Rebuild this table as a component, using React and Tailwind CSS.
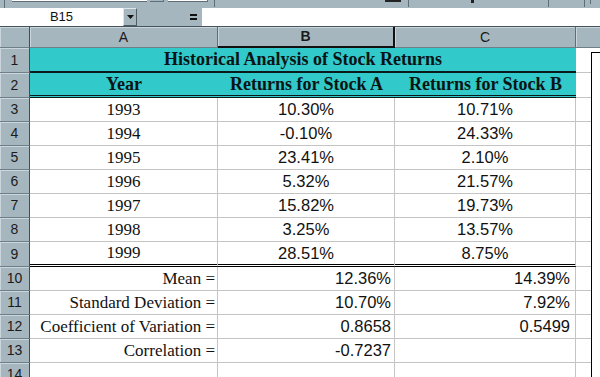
import React from "react";

const serif = { fontFamily: '"Liberation Serif", "Times New Roman", serif' };
const sans = { fontFamily: '"Liberation Sans", Arial, sans-serif' };

const years = [
  ["1993", "10.30%", "10.71%"],
  ["1994", "-0.10%", "24.33%"],
  ["1995", "23.41%", "2.10%"],
  ["1996", "5.32%", "21.57%"],
  ["1997", "15.82%", "19.73%"],
  ["1998", "3.25%", "13.57%"],
  ["1999", "28.51%", "8.75%"],
];

const stats = [
  ["Mean =", "12.36%", "14.39%"],
  ["Standard Deviation =", "10.70%", "7.92%"],
  ["Coefficient of Variation =", "0.8658", "0.5499"],
  ["Correlation =", "-0.7237", ""],
];

function RowHead({ n }) {
  return (
    <div
      className="w-[30px] shrink-0 flex items-center justify-center bg-[#a6b6be] border-r border-r-[#3e4e56] border-b border-b-[#6f7f87] shadow-[inset_1px_1px_0_#cbd6dc] text-[14px] text-[#1a1a1a]"
      style={sans}
    >
      {n}
    </div>
  );
}

function DataRow({ n, a, b, c, last, stat }) {
  const bottom = last
    ? "border-b-[3px] border-double border-b-black"
    : "border-b border-b-[#c4c4c4]";
  return (
    <div className={`flex ${n === 9 ? "h-[25px]" : "h-[24px]"}`}>
      <RowHead n={n} />
      <div
        className={`w-[188px] shrink-0 flex items-center ${stat ? "justify-end pr-[2px]" : "justify-center"} border-r border-r-[#c4c4c4] ${bottom} text-[17px] text-[#111]`}
        style={serif}
      >
        {a}
      </div>
      <div
        className={`w-[177px] shrink-0 flex items-center ${stat ? "justify-end pr-[3px]" : "justify-center"} border-r border-r-[#c4c4c4] ${bottom} text-[16.5px] text-[#111]`}
        style={sans}
      >
        {b}
      </div>
      <div
        className={`w-[181px] shrink-0 flex items-center ${stat ? "justify-end pr-[5px]" : "justify-center"} border-r border-r-[#c4c4c4] ${bottom} text-[16.5px] text-[#111]`}
        style={sans}
      >
        {c}
      </div>
      <div className="flex-1 border-b border-b-[#c4c4c4]" />
    </div>
  );
}

export default function App() {
  return (
    <div className="relative w-[600px] h-[377px] overflow-hidden bg-white">
      {/* bottom of the formatting toolbar */}
      <div className="h-[8px] bg-[#a6b6be] relative flex">
        <div className="w-[4px] border-r border-[#5e6e76] ml-[1px]" />
        <div className="ml-[7px] w-[135px] h-[2px] bg-white border-b border-[#5e6e76]" />
        <div className="ml-[3px] w-[14px] h-[2px] border-r border-b border-[#5e6e76]" />
        <div className="ml-[4px] w-[40px] h-[2px] bg-white border-b border-r border-[#5e6e76]" />
        <div className="ml-[6px] w-[1px] h-[7px] bg-[#5e6e76]" />
        <div className="ml-[170px] w-[16px] h-[2px] bg-[#222]" />
        <div className="ml-[7px] w-[1px] h-[7px] bg-[#5e6e76]" />
        <div className="ml-[62px] w-[3px] h-[3px] bg-[#222]" />
        <div className="ml-[74px] w-[1px] h-[7px] bg-[#5e6e76]" />
        <div className="ml-[35px] w-[1px] h-[7px] bg-[#5e6e76]" />
        <div className="ml-[5px] w-[1px] h-[4px] bg-[#5e6e76]" />
      </div>

      {/* formula bar */}
      <div className="h-[18px] flex bg-[#a6b6be]">
        <div
          className="w-[123px] bg-white flex items-center justify-center text-[13px] text-[#111]"
          style={sans}
        >
          B15
        </div>
        <div className="w-[14px] flex items-center justify-center border-t border-l border-t-[#dfe6ea] border-l-[#dfe6ea] border-r border-b border-r-[#4e5e66] border-b-[#4e5e66]">
          <svg width="7" height="4" viewBox="0 0 7 4">
            <path d="M0 0h7L3.5 4z" fill="#111" />
          </svg>
        </div>
        <div className="w-[65px] flex items-center justify-end pr-[5px]">
          <div className="flex flex-col gap-[2px]">
            <div className="w-[7px] h-[2px] bg-[#111]" />
            <div className="w-[7px] h-[2px] bg-[#111]" />
          </div>
        </div>
        <div className="flex-1 bg-white" />
      </div>

      {/* column headers */}
      <div
        className="h-[22px] flex bg-[#a6b6be] border-t border-t-[#44545c] text-[14px] text-[#1a1a1a]"
        style={sans}
      >
        <div className="w-[30px] border-r border-r-[#3e4e56] border-b border-b-[#6f7f87] shadow-[inset_1px_1px_0_#cbd6dc]" />
        <div className="w-[188px] flex items-center justify-center border-r border-r-[#5e6e76] border-b border-b-[#6f7f87] shadow-[inset_1px_1px_0_#cbd6dc]">
          A
        </div>
        <div className="w-[177px] flex items-center justify-center border-r-2 border-r-[#111] border-b-2 border-b-[#111] shadow-[inset_1px_1px_0_#cbd6dc] font-bold">
          B
        </div>
        <div className="w-[181px] flex items-center justify-center border-r border-r-[#5e6e76] border-b border-b-[#6f7f87] shadow-[inset_1px_1px_0_#cbd6dc]">
          C
        </div>
        <div className="flex-1 border-b border-b-[#6f7f87] shadow-[inset_1px_1px_0_#cbd6dc]" />
      </div>

      {/* row 1: title */}
      <div className="h-[25px] flex">
        <RowHead n={1} />
        <div
          className="w-[546px] bg-[#31c9c9] border-b-2 border-b-[#0a1a1a] flex items-center justify-center font-bold text-[18px] text-[#0b1414]"
          style={serif}
        >
          Historical Analysis of Stock Returns
        </div>
        <div className="flex-1 border-b border-b-[#c4c4c4]" />
      </div>

      {/* row 2: column titles */}
      <div className="h-[25px] flex">
        <RowHead n={2} />
        {[
          ["w-[188px]", "Year"],
          ["w-[177px]", "Returns for Stock A"],
          ["w-[181px]", "Returns for Stock B"],
        ].map(([w, t]) => (
          <div
            key={t}
            className={`${w} shrink-0 bg-[#31c9c9] border-b-[3px] border-double border-b-[#0a1a1a] flex items-center justify-center font-bold text-[18px] text-[#0b1414]`}
            style={serif}
          >
            {t}
          </div>
        ))}
        <div className="flex-1 border-b border-b-[#c4c4c4]" />
      </div>

      {years.map((r, i) => (
        <DataRow key={r[0]} n={i + 3} a={r[0]} b={r[1]} c={r[2]} last={i === 6} />
      ))}
      {stats.map((r, i) => (
        <DataRow key={r[0]} n={i + 10} a={r[0]} b={r[1]} c={r[2]} stat />
      ))}
      <div className="h-[24px] flex">
        <RowHead n={14} />
        <div className="w-[188px] border-r border-r-[#c4c4c4]" />
        <div className="w-[177px] border-r border-r-[#c4c4c4]" />
        <div className="w-[181px] border-r border-r-[#c4c4c4]" />
      </div>

      {/* embedded chart frame lying over column D */}
      <div className="absolute left-[591px] top-[52px] w-[40px] h-[340px] bg-white border border-black" />
    </div>
  );
}
